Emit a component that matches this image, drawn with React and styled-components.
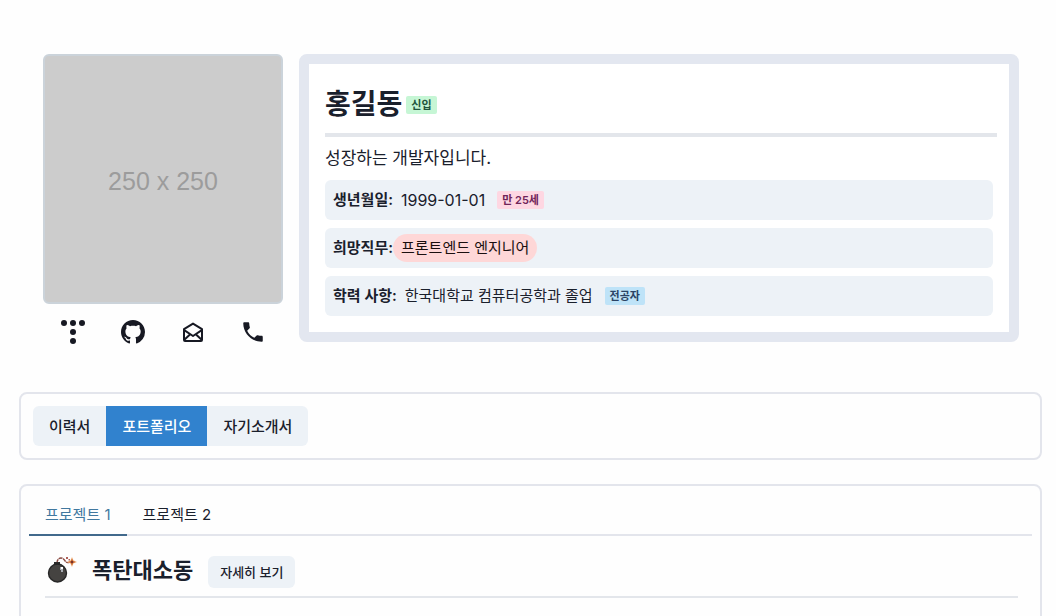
import React, { useState } from "react";
import styled, { createGlobalStyle } from "styled-components";
import { BsGithub } from "react-icons/bs";
import { MdPhone } from "react-icons/md";

const GlobalStyle = createGlobalStyle`
  *, *::before, *::after { box-sizing: border-box; }
  body {
    margin: 0;
    background: #fefefe;
    color: #1a202c;
    font-family: Inter, "Noto Sans CJK KR", sans-serif;
    font-size: 15px;
    line-height: 24px;
  }
  h1, h2, p, dl, dd { margin: 0; }
  button { font: inherit; color: inherit; border: 0; cursor: pointer; }
`;

const Page = styled.main`
  display: flex;
  flex-direction: column;
  gap: 24px;
  padding: 54px 14px 24px 19px;
`;

const Profile = styled.section`
  display: grid;
  grid-template-columns: 1fr 3fr;
  align-items: start;
  gap: 16px;
  padding: 0 23px 16px 24px;
`;

const Avatar = styled.div`
  display: flex;
  align-items: center;
  justify-content: center;
  height: 250px;
  border: 2px solid #cbd3da;
  border-radius: 6px;
  background: #cccccc;
  color: #9c9c9c;
  font-family: "Liberation Sans", sans-serif;
  font-size: 25px;
  padding-top: 4px;
`;

const Contacts = styled.nav`
  display: grid;
  grid-template-columns: repeat(4, 1fr);
  margin-top: 8px;
`;

const ContactLink = styled.a`
  display: flex;
  align-items: center;
  justify-content: center;
  height: 40px;
  color: #171923;
`;

const ProfileCard = styled.div`
  padding: 16px 12px 16px 16px;
  border: 10px solid #e3e7f0;
  border-radius: 8px;
  background: #ffffff;
`;

const NameRow = styled.div`
  display: flex;
  align-items: center;
  gap: 4px;
  padding-top: 4px;
`;

const Name = styled.h1`
  font-size: 28px;
  line-height: 41px;
  font-weight: 600;
`;

const badgeTones = {
  green: "background: #c6f6d5; color: #22543d;",
  pink: "background: #fed7e2; color: #702459;",
  blue: "background: #bee3f8; color: #2a4365;",
};

const Badge = styled.span`
  padding: 0 5px;
  border-radius: 2px;
  font-size: 11px;
  line-height: 18px;
  font-weight: 600;
  ${(p) => badgeTones[p.$tone]}
`;

const Rule = styled.hr`
  margin: 8px 0;
  border: 0;
  border-top: ${(p) => p.$size}px solid #e3e6eb;
`;

const Intro = styled.p`
  font-size: 17px;
  line-height: 27px;
  font-weight: 400;
`;

const Facts = styled.dl`
  display: flex;
  flex-direction: column;
  gap: 8px;
  margin: 8px 4px 0 0;
`;

const Fact = styled.div`
  display: flex;
  align-items: center;
  min-height: 40px;
  padding: 0 8px;
  border-radius: 6px;
  background: #edf2f7;
`;

const FactLabel = styled.dt`
  font-weight: 600;
`;

const FactValue = styled.dd`
  display: flex;
  align-items: center;
  gap: 12px;
  padding-left: 8px;
`;

const DateText = styled.time`
  font-size: 16px;
`;

const Pill = styled.span`
  margin-left: -8px;
  padding: 0 8px;
  border-radius: 14px;
  background: #fed7d7;
  color: #1a0f0f;
  line-height: 28px;
`;

const Card = styled.section`
  padding: ${(p) => p.$pad}px;
  border: 2px solid #e3e5ec;
  border-radius: 8px;
`;

const Segments = styled.div`
  display: inline-flex;
  vertical-align: top;
  overflow: hidden;
  border-radius: 6px;
`;

const Segment = styled.button`
  height: 40px;
  padding: 2px 16px 0;
  font-weight: 500;
  background: ${(p) => (p.$active ? "#3182ce" : "#edf2f7")};
  color: ${(p) => (p.$active ? "#ffffff" : "#1a202c")};
`;

const TabList = styled.div`
  display: flex;
  border-bottom: 2px solid #e3e5ec;
`;

const Tab = styled.button`
  height: 42px;
  margin-bottom: -2px;
  padding: 2px 16px 0;
  background: none;
  border-bottom: 2px solid ${(p) => (p.$active ? "#41698c" : "transparent")};
  color: ${(p) => (p.$active ? "#41789f" : "#1a202c")};
`;

const Panel = styled.div`
  min-height: 160px;
  padding: 16px 14px 16px 16px;
`;

const ProjectHead = styled.div`
  display: flex;
  align-items: flex-end;
`;

const ProjectIcon = styled.svg`
  align-self: center;
  margin-right: 15px;
`;

const ProjectTitle = styled.h2`
  font-size: 22px;
  line-height: 36px;
  font-weight: 600;
  margin-right: 15px;
`;

const DetailButton = styled.button`
  height: 32px;
  padding: 0 12px;
  border-radius: 6px;
  background: #edf2f7;
  font-size: 13px;
  font-weight: 500;
`;

function TistoryIcon() {
  return (
    <svg width="26" height="26" viewBox="0 0 26 26" fill="currentColor" aria-hidden="true">
      <circle cx="4" cy="4" r="3" />
      <circle cx="13" cy="4" r="3" />
      <circle cx="22" cy="4" r="3" />
      <circle cx="13" cy="13" r="3" />
      <circle cx="13" cy="22" r="3" />
    </svg>
  );
}

function MailIcon() {
  return (
    <svg width="24" height="24" viewBox="0 0 24 24" fill="none" stroke="currentColor" strokeWidth="2" strokeLinejoin="round" aria-hidden="true">
      <path d="M3 9.2 12 3.6l9 5.6V20a1 1 0 0 1-1 1H4a1 1 0 0 1-1-1Z" />
      <path d="M3.2 10.2 12 16l8.8-5.8M3.6 19.6 9.5 14M20.4 19.6 14.5 14" />
    </svg>
  );
}

function BombIcon() {
  return (
    <ProjectIcon width="32" height="32" viewBox="0 0 32 32" aria-hidden="true">
      <path d="M12 9c0-4 3-6 6-4.500 2.500 1.500 2 5 6 4" fill="none" stroke="#8a4a42" strokeWidth="1.4" strokeDasharray="4 .6" />
      <rect x="9" y="8" width="6" height="4" fill="#2d2d2d" />
      <circle cx="12.500" cy="19" r="9" fill="#454341" stroke="#272727" strokeWidth="1.4" />
      <path d="M15 13h3v5h-2v-2h-1z" fill="#a9adb3" />
      <path d="M16 13h2v2h-2z" fill="#ffffff" />
      <path d="M27 3l1.400 3.200 3.600 1.800-3.600 1.600-1.400 3.400-1.600-3.400-3.400-1.600 3.400-1.600z" fill="#f3b27c" />
      <path d="M27 4.500l1.100 2.500 2.400 1-2.400 1.100-1.100 2.400-1.100-2.400-2.400-1.100 2.400-1z" fill="#c0602f" />
      <path d="M26 7h2v2h-2z" fill="#7a3328" />
      <path d="M21 3h2v2h-2zM23.500 5h1.500v1.500h-1.500z" fill="#b0615a" />
    </ProjectIcon>
  );
}

const sections = ["이력서", "포트폴리오", "자기소개서"];
const projects = ["프로젝트 1", "프로젝트 2"];

export default function App() {
  const [section, setSection] = useState(1);
  const [project, setProject] = useState(0);

  return (
    <>
      <GlobalStyle />
      <Page>
        <Profile>
          <div>
            <Avatar>250 x 250</Avatar>
            <Contacts>
              <ContactLink href="#blog" aria-label="블로그"><TistoryIcon /></ContactLink>
              <ContactLink href="#github" aria-label="GitHub"><BsGithub size={24} /></ContactLink>
              <ContactLink href="#mail" aria-label="이메일"><MailIcon /></ContactLink>
              <ContactLink href="#phone" aria-label="전화"><MdPhone size={26} /></ContactLink>
            </Contacts>
          </div>
          <ProfileCard>
            <NameRow>
              <Name>홍길동</Name>
              <Badge $tone="green">신입</Badge>
            </NameRow>
            <Rule $size={4} />
            <Intro>성장하는 개발자입니다.</Intro>
            <Facts>
              <Fact>
                <FactLabel>생년월일:</FactLabel>
                <FactValue>
                  <DateText dateTime="1999-01-01">1999-01-01</DateText>
                  <Badge $tone="pink">만 25세</Badge>
                </FactValue>
              </Fact>
              <Fact>
                <FactLabel>희망직무:</FactLabel>
                <FactValue><Pill>프론트엔드 엔지니어</Pill></FactValue>
              </Fact>
              <Fact>
                <FactLabel>학력 사항:</FactLabel>
                <FactValue>
                  한국대학교 컴퓨터공학과 졸업
                  <Badge $tone="blue">전공자</Badge>
                </FactValue>
              </Fact>
            </Facts>
          </ProfileCard>
        </Profile>

        <Card $pad={12}>
          <Segments>
            {sections.map((label, i) => (
              <Segment key={label} type="button" aria-pressed={i === section} $active={i === section} onClick={() => setSection(i)}>
                {label}
              </Segment>
            ))}
          </Segments>
        </Card>

        <Card $pad={8}>
          <TabList role="tablist">
            {projects.map((label, i) => (
              <Tab key={label} type="button" role="tab" aria-selected={i === project} $active={i === project} onClick={() => setProject(i)}>
                {label}
              </Tab>
            ))}
          </TabList>
          <Panel role="tabpanel">
            <ProjectHead>
              <BombIcon />
              <ProjectTitle>폭탄대소동</ProjectTitle>
              <DetailButton type="button">자세히 보기</DetailButton>
            </ProjectHead>
            <Rule $size={2} />
          </Panel>
        </Card>
      </Page>
    </>
  );
}
